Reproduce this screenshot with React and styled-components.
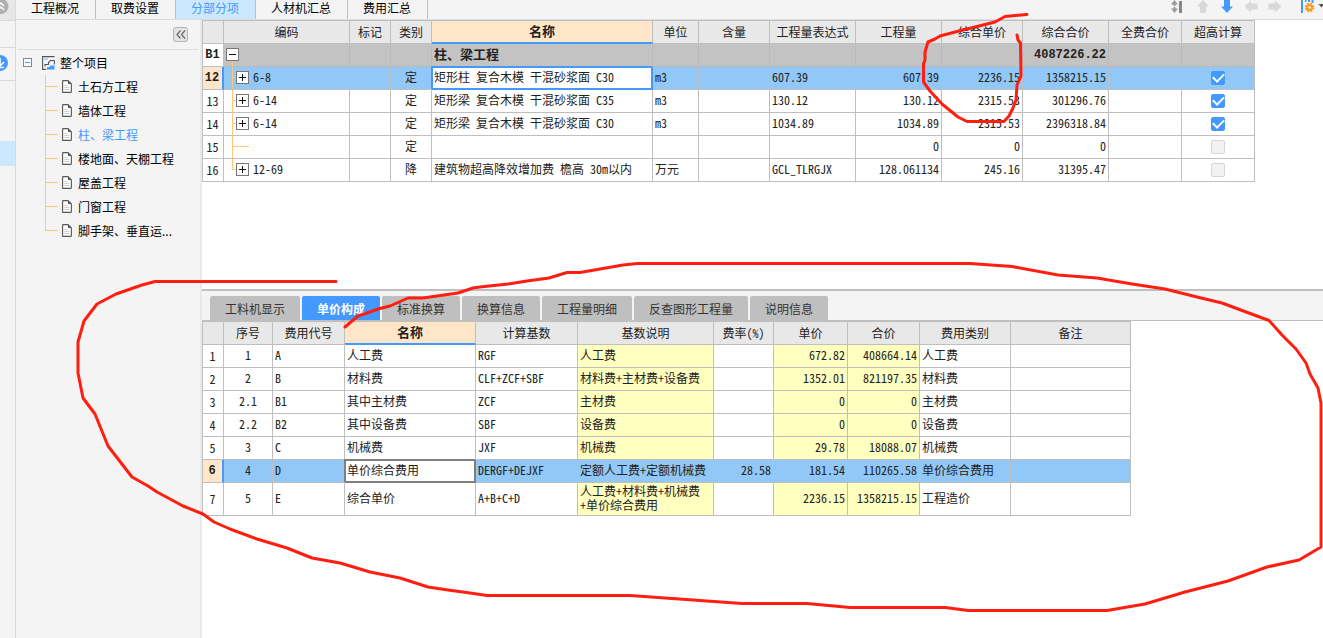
import React, { useState } from 'react'
import styled, { createGlobalStyle, css } from 'styled-components'

const BLUE = '#4499ff'
const LINE = '#bfbfbf'
const BRANCH = '#ffc878'

const GlobalStyle = createGlobalStyle`
    * {
        box-sizing: border-box;
    }
    body {
        margin: 0;
        background: #fff;
        color: #222;
        font-family: "Noto Sans CJK SC", sans-serif;
        font-size: 12px;
        line-height: 15px;
    }
    button {
        margin: 0;
        padding: 0;
        border: 0;
        background: none;
        color: inherit;
        font: inherit;
    }
    svg {
        display: block;
    }
`
const Page = styled.div`
    position: relative;
    display: flex;
    min-height: 100vh;
    overflow: hidden;
`
const Strip = styled.div`
    flex: none;
    width: 16px;
    background: #f4f4f4;
    border-right: 1px solid #d9d9d9;
`
const StripCell = styled.div`
    height: ${props => props.$height}px;
    border-bottom: ${props => props.$line ? '1px solid #d9d9d9' : '0'};
    background: ${props => props.$bg || 'transparent'};
    overflow: hidden;
`
const Content = styled.div`
    flex: 1;
    min-width: 0;
    display: flex;
    flex-direction: column;
`
const TopBar = styled.header`
    display: flex;
    justify-content: space-between;
    height: 20px;
    background: #f4f4f4;
    border-bottom: 1px solid #dcdcdc;
`
const TopTabs = styled.nav`
    display: flex;
`
const TopTab = styled.button`
    height: 19px;
    padding: 0 16px 6px 15px;
    border-right: 1px solid ${LINE};
    background: ${props => props.$active ? '#cce8ff' : 'transparent'};
    color: ${props => props.$active ? BLUE : '#000'};
`
const Tools = styled.div`
    display: flex;
`
const Tool = styled.button`
    display: flex;
    justify-content: center;
    width: 24px;
    height: 16px;
    margin-right: ${props => props.$gap || 0}px;
`
const Body = styled.div`
    flex: 1;
    display: flex;
`
const Sidebar = styled.aside`
    flex: none;
    width: 186px;
    padding: 0 2px;
    background: #f4f4f4;
    border-right: 2px solid #e9e9e9;
`
const SidebarHead = styled.div`
    display: flex;
    justify-content: flex-end;
    align-items: center;
    height: 30px;
    padding-right: 10px;
    border-bottom: 1px solid #dedede;
`
const Collapse = styled.button`
    display: flex;
    align-items: center;
    justify-content: center;
    width: 15px;
    height: 15px;
    border: 1px solid #b4b4b4;
    border-radius: 3px;
    background: #e4e4e4;
`
const Tree = styled.ul`
    margin: 0;
    padding: 0;
    list-style: none;
    color: #000;
`
const TreeRoot = styled.div`
    display: flex;
    align-items: center;
    gap: 5px;
    height: 25px;
    padding-left: 5px;
    color: #000;
`
const TreeItem = styled.li`
    display: flex;
    align-items: center;
    height: 24px;
    padding-left: 27px;
    color: ${props => props.$active ? BLUE : '#000'};
`
const TreeLink = styled.a`
    display: flex;
    align-items: center;
    gap: 6px;
    margin-left: 4px;
    padding-bottom: 1px;
    color: inherit;
    text-decoration: none;
`
const Main = styled.main`
    flex: 1;
    min-width: 0;
    display: flex;
    flex-direction: column;
`
const UpperPane = styled.section`
    min-height: 269px;
`
const LowerPane = styled.section`
    flex: 1;
    border-top: 2px solid ${LINE};
`
const DetailTabs = styled.div`
    display: flex;
    gap: 2px;
    padding: 5px 8px 0;
    background: #f4f4f4;
    border-bottom: 1px solid ${LINE};
`
const DetailTab = styled.button`
    height: 24px;
    padding: 0 15px;
    border-radius: 2px 2px 0 0;
    background: ${props => props.$active ? BLUE : LINE};
    color: ${props => props.$active ? '#fff' : '#333'};
    font-weight: ${props => props.$active ? 'bold' : 'normal'};
`
/* hwid: digits and latin letters take half a Chinese character */
const Grid = styled.table`
    table-layout: fixed;
    width: ${props => props.$width}px;
    border-collapse: separate;
    border-spacing: 0;
    border-top: 1px solid ${LINE};
    border-left: 1px solid ${LINE};
    font-feature-settings: "hwid";
    line-height: 14px;
`
const Col = styled.col`
    width: ${props => props.$width}px;
`
const Head = styled.th`
    height: 23px;
    padding: 0;
    border-right: 1px solid ${LINE};
    border-bottom: 1px solid ${LINE};
    background: #e8e8e8;
    font-weight: normal;
    ${props => props.$current && css`
        padding-bottom: 2px;
        border-bottom: 2px solid ${BLUE};
        background: #ffe6c8;
        font-weight: bold;
        font-size: 13px;
    `}
`
const boldDigits = css`
    font-family: "Liberation Mono", monospace;
    font-weight: bold;
    font-size: 12px;
`
const RowHead = styled.th`
    padding: 0 1px 0 0;
    border-right: 1px solid ${LINE};
    border-bottom: 1px solid ${LINE};
    background: #fff;
    font-weight: normal;
    ${props => props.$bold && boldDigits}
    ${props => props.$current && css`
        border-right: 2px solid ${BLUE};
        background: #ffe6c8;
    `}
`
const Cell = styled.td`
    padding: 0 2px 2px;
    border-right: 1px solid ${LINE};
    border-bottom: 1px solid ${LINE};
    background: ${props => props.$bg || 'transparent'};
    text-align: ${props => props.$align || 'left'};
    white-space: pre;
    ${props => props.$focus && css`
        position: relative;
        border-color: ${props.$focus};
        background: #fff;
        box-shadow: -1px -1px 0 ${props.$focus}, inset 1px 1px 0 ${props.$focus}, inset -1px -1px 0 ${props.$focus};
    `}
`
const ToolCell = styled(Cell)`
    padding: 0;
`
const Row = styled.tr`
    height: ${props => props.$tall ? 33 : 23}px;
    ${props => props.$group && css`
        ${Cell} {
            background: #c3c3c3;
            border-color: #bababa;
            font-weight: bold;
            font-size: 13px;
        }
    `}
    ${props => props.$selected && css`
        background: #91c8f7;
    `}
`
const Total = styled.span`
    ${props => props.$group && boldDigits}
`
const CodeCell = styled.div`
    display: flex;
    align-items: center;
    gap: 3px;
    height: 22px;
`
const Code = styled.span`
    padding-bottom: 2px;
`
const Check = styled.input`
    appearance: none;
    display: grid;
    place-content: center;
    width: 14px;
    height: 14px;
    margin: 0 auto;
    border: 1px solid #d6d6d6;
    border-radius: 2px;
    background: #f2f2f2;
    &:checked {
        border-color: ${BLUE};
        background: ${BLUE};
    }
    &:checked::before {
        content: "";
        width: 9px;
        height: 5px;
        margin-bottom: 3px;
        border-left: 2px solid #fff;
        border-bottom: 2px solid #fff;
        transform: rotate(-45deg);
    }
`
const Marks = styled.svg`
    position: absolute;
    top: 0;
    left: 0;
    pointer-events: none;
`

const topTabs = ['工程概况', '取费设置', '分部分项', '人材机汇总', '费用汇总']
const treeItems = ['土石方工程', '墙体工程', '柱、梁工程', '楼地面、天棚工程', '屋盖工程', '门窗工程', '脚手架、垂直运...']
const detailTabs = ['工料机显示', '单价构成', '标准换算', '换算信息', '工程量明细', '反查图形工程量', '说明信息']

const itemCols = [
    ['', 21], ['编码', 126], ['标记', 41], ['类别', 41], ['名称', 221], ['单位', 46], ['含量', 71],
    ['工程量表达式', 86], ['工程量', 86], ['综合单价', 81], ['综合合价', 86], ['全费合价', 73], ['超高计算', 73],
]
const items = [
    { no: 'B1', node: 'minus', name: '柱、梁工程', total: '4087226.22', group: true },
    { no: '12', node: 'plus', code: '6-8', type: '定', name: '矩形柱 复合木模 干混砂浆面 C30', unit: 'm3', expr: '607.39', qty: '607.39', price: '2236.15', total: '1358215.15', high: true, selected: true },
    { no: '13', node: 'plus', code: '6-14', type: '定', name: '矩形梁 复合木模 干混砂浆面 C35', unit: 'm3', expr: '130.12', qty: '130.12', price: '2315.53', total: '301296.76', high: true },
    { no: '14', node: 'plus', code: '6-14', type: '定', name: '矩形梁 复合木模 干混砂浆面 C30', unit: 'm3', expr: '1034.89', qty: '1034.89', price: '2315.53', total: '2396318.84', high: true },
    { no: '15', node: 'leaf', type: '定', qty: '0', price: '0', total: '0', high: false },
    { no: '16', node: 'last', code: '12-69', type: '降', name: '建筑物超高降效增加费 檐高 30m以内', unit: '万元', expr: 'GCL_TLRGJX', qty: '128.061134', price: '245.16', total: '31395.47', high: false },
]

const feeCols = [
    ['', 21], ['序号', 49], ['费用代号', 72], ['名称', 131], ['计算基数', 102], ['基数说明', 136],
    ['费率(%)', 60], ['单价', 74], ['合价', 72], ['费用类别', 91], ['备注', 120],
]
const fees = [
    ['1', 'A', '人工费', 'RGF', '人工费', '', '672.82', '408664.14', '人工费'],
    ['2', 'B', '材料费', 'CLF+ZCF+SBF', '材料费+主材费+设备费', '', '1352.01', '821197.35', '材料费'],
    ['2.1', 'B1', '其中主材费', 'ZCF', '主材费', '', '0', '0', '主材费'],
    ['2.2', 'B2', '其中设备费', 'SBF', '设备费', '', '0', '0', '设备费'],
    ['3', 'C', '机械费', 'JXF', '机械费', '', '29.78', '18088.07', '机械费'],
    ['4', 'D', '单价综合费用', 'DERGF+DEJXF', '定额人工费+定额机械费', '28.58', '181.54', '110265.58', '单价综合费用'],
    ['5', 'E', '综合单价', 'A+B+C+D', '人工费+材料费+机械费\n+单价综合费用', '', '2236.15', '1358215.15', '工程造价'],
]

const Node = ({ kind }) => {
    const x = kind === 'minus' ? 2 : 12
    return (
        <svg width="26" height="22" viewBox="0 0 26 22" fill="none" shapeRendering="crispEdges">
            {kind === 'minus' && <path d="M8.5 17v5" stroke={BRANCH} />}
            {kind !== 'minus' && <path d={`M8.5 0V${kind === 'last' ? 10.5 : 22}M8 10.5h${kind === 'leaf' ? 17 : 4}`} stroke={BRANCH} />}
            {kind !== 'leaf' && <rect x={x + 0.5} y="4.5" width="12" height="12" fill="#fff" stroke="#777" />}
            {kind !== 'leaf' && <path d={`M${x + 3} 10.5h7`} stroke="#111" />}
            {(kind === 'plus' || kind === 'last') && <path d={`M${x + 6.5} 7v7`} stroke="#111" />}
        </svg>
    )
}

const Doc = () => (
    <svg width="10" height="13" viewBox="0 0 10 13" fill="none">
        <path d="M.6 1.2Q.6.6 1.2.6H6L9.4 4v7.8q0 .6-.6.6H1.2q-.6 0-.6-.6z" fill="#fff" stroke="#555" strokeWidth="1.1" />
        <path d="M6 .5V4h3.5z" fill="#555" />
        <path d="M2.5 5.5h3M2.5 7.5h5M2.5 9.5h5" stroke="#ccc" />
    </svg>
)

const Project = () => (
    <svg width="13" height="14" viewBox="0 0 13 14" fill="none">
        <path d="M12.5.6H.6v12.8h3.5M12.4 4.5v4" stroke="#555" strokeWidth="1.1" />
        <path d="M2 2.3h4v1.6H2z" fill="#a9cdfb" />
        <path d="M3 10.5V8.5h3.5V6.5L8.5 4.5h4" stroke="#555" strokeWidth="1.1" />
        <path d="M5 13.5V11h3V9.5h4.5v4z" fill={BLUE} />
    </svg>
)

const Arrow = ({ turn, color }) => (
    <svg width="14" height="14" viewBox="0 0 14 14">
        <path d="M7 0l6 6.5H10V13H4V6.5H1z" fill={color} transform={`rotate(${turn} 7 6.5)`} />
    </svg>
)

const Headings = ({ cols }) => (
    <>
        <colgroup>
            {cols.map(([label, width], i) => <Col key={i} $width={width} />)}
        </colgroup>
        <thead>
            <tr>
                {cols.map(([label], i) => (
                    <Head key={i} $current={label === '名称'}>{label}</Head>
                ))}
            </tr>
        </thead>
    </>
)

const ItemTable = () => (
    <Grid $width={1053}>
        <Headings cols={itemCols} />
        <tbody>
            {items.map(item => (
                <Row key={item.no} $group={item.group} $selected={item.selected}>
                    <RowHead $current={item.selected} $bold={item.selected || item.group}>{item.no}</RowHead>
                    <ToolCell>
                        <CodeCell>
                            <Node kind={item.node} />
                            <Code>{item.code}</Code>
                        </CodeCell>
                    </ToolCell>
                    <Cell />
                    <Cell $align="center">{item.type}</Cell>
                    <Cell $focus={item.selected && BLUE}>{item.name}</Cell>
                    <Cell>{item.unit}</Cell>
                    <Cell />
                    <Cell>{item.expr}</Cell>
                    <Cell $align="right">{item.qty}</Cell>
                    <Cell $align="right">{item.price}</Cell>
                    <Cell $align="right"><Total $group={item.group}>{item.total}</Total></Cell>
                    <Cell />
                    <ToolCell>
                        {!item.group &&
                            <Check
                                type="checkbox"
                                aria-label={`超高计算 ${item.no}`}
                                defaultChecked={item.high}
                                disabled={!item.high}
                            />
                        }
                    </ToolCell>
                </Row>
            ))}
        </tbody>
    </Grid>
)

const FeeTable = () => (
    <Grid $width={929}>
        <Headings cols={feeCols} />
        <tbody>
            {fees.map((fee, i) => {
                const selected = i === 5
                const yellow = selected ? undefined : '#ffffc0'
                return (
                    <Row key={i} $selected={selected} $tall={i === 6}>
                        <RowHead $current={selected} $bold={selected}>{i + 1}</RowHead>
                        <Cell $align="center">{fee[0]}</Cell>
                        <Cell>{fee[1]}</Cell>
                        <Cell $focus={selected && '#7f7f7f'}>{fee[2]}</Cell>
                        <Cell>{fee[3]}</Cell>
                        <Cell $bg={yellow}>{fee[4]}</Cell>
                        <Cell $align="right">{fee[5]}</Cell>
                        <Cell $bg={yellow} $align="right">{fee[6]}</Cell>
                        <Cell $bg={yellow} $align="right">{fee[7]}</Cell>
                        <Cell>{fee[8]}</Cell>
                        <Cell />
                    </Row>
                )
            })}
        </tbody>
    </Grid>
)

const App = () => {
    const [topTab, setTopTab] = useState(2)
    const [detailTab, setDetailTab] = useState(1)

    return (
        <Page>
            <GlobalStyle />
            <Strip>
                <StripCell $height={21} $line $bg="#e7e7e7">
                    <svg width="15" height="20" viewBox="0 0 15 20" fill="none">
                        <circle cx="1" cy="6.5" r="7.5" fill="#b0b0b0" />
                        <path d="M-2 6l3-3 3 3M-2 10l3-3 3 3" stroke="#fff" strokeWidth="1.5" />
                    </svg>
                </StripCell>
                <StripCell $height={27} $line />
                <StripCell $height={33} $line>
                    <svg width="15" height="32" viewBox="0 0 15 32" fill="none">
                        <circle cx="0" cy="15" r="8" fill={BLUE} />
                        <path d="M0 10v7M-4 14l4 4 4-4M-4 19.5h8" stroke="#fff" strokeWidth="1.5" />
                    </svg>
                </StripCell>
                <StripCell $height={60} />
                <StripCell $height={25} $bg="#cce8ff" />
            </Strip>
            <Content>
                <TopBar>
                    <TopTabs>
                        {topTabs.map((label, i) => (
                            <TopTab key={label} $active={i === topTab} onClick={() => setTopTab(i)}>{label}</TopTab>
                        ))}
                    </TopTabs>
                    <Tools>
                        <Tool aria-label="排序" $gap={2}>
                            <svg width="13" height="14" viewBox="0 0 13 14">
                                <path d="M3.5 0L7 4.5H4.5V8.5H7L3.5 13 0 8.500h2.500v-4H0z" fill="#999" />
                                <path d="M2 6h3v1H2z" fill="#f4f4f4" />
                                <path d="M8 1h3v12H8z" fill="#888" />
                            </svg>
                        </Tool>
                        <Tool aria-label="上移"><Arrow turn={0} color="#d9d9d9" /></Tool>
                        <Tool aria-label="下移"><Arrow turn={180} color={BLUE} /></Tool>
                        <Tool aria-label="左移"><Arrow turn={-90} color="#d9d9d9" /></Tool>
                        <Tool aria-label="右移" $gap={12}><Arrow turn={90} color="#d9d9d9" /></Tool>
                        <Tool aria-label="设置">
                            <svg width="24" height="14" viewBox="0 0 24 14">
                                <path d="M2 0h2v13H2zM6 0h1.5v2H6zM9 0h2v2H9zM12.5 0h2v3h-2z" fill={BLUE} />
                                <circle cx="10.5" cy="7.5" r="3.5" fill="#ff9b1f" />
                                <circle cx="10.5" cy="7.5" r="3.9" fill="none" stroke="#ff9b1f" strokeWidth="1.8" strokeDasharray="2 1.06" />
                                <circle cx="10.5" cy="7.5" r="1.3" fill="#fff" />
                                <path d="M19.5 4H25l-2.7 3.5z" fill="#555" />
                            </svg>
                        </Tool>
                    </Tools>
                </TopBar>
                <Body>
                    <Sidebar>
                        <SidebarHead>
                            <Collapse aria-label="收起">
                                <svg width="10" height="9" viewBox="0 0 10 9" fill="none">
                                    <path d="M4.5.5l-3.500 4 3.500 4M9 .5l-3.500 4 3.500 4" stroke="#666" strokeWidth="1.2" />
                                </svg>
                            </Collapse>
                        </SidebarHead>
                        <TreeRoot>
                            <svg width="14" height="9" viewBox="0 0 14 9" fill="none" shapeRendering="crispEdges">
                                <path d="M.5.5h8v8h-8z" fill="#fff" stroke="#888" />
                                <path d="M2 4.5h5" stroke="#2aa7e0" />
                            </svg>
                            <Project />
                            <span>整个项目</span>
                        </TreeRoot>
                        <Tree>
                            {treeItems.map((label, i) => (
                                <TreeItem key={label} $active={i === 2}>
                                    <svg width="13" height="24" viewBox="0 0 13 24" fill="none" shapeRendering="crispEdges">
                                        <path d={`M.5 0V${i === treeItems.length - 1 ? 11 : 24}M0 11.5h13`} stroke={BRANCH} />
                                    </svg>
                                    <TreeLink href="#"><Doc />{label}</TreeLink>
                                </TreeItem>
                            ))}
                        </Tree>
                    </Sidebar>
                    <Main>
                        <UpperPane>
                            <ItemTable />
                        </UpperPane>
                        <LowerPane>
                            <DetailTabs>
                                {detailTabs.map((label, i) => (
                                    <DetailTab key={label} $active={i === detailTab} onClick={() => setDetailTab(i)}>{label}</DetailTab>
                                ))}
                            </DetailTabs>
                            <FeeTable />
                        </LowerPane>
                    </Main>
                </Body>
            </Content>
            {/* hand-drawn red pen marks over the sheet */}
            <Marks width="1323" height="638" viewBox="0 0 1323 638" fill="none" stroke="#ff1e10" strokeWidth="3" strokeLinejoin="round" strokeLinecap="round">
                <path d="M1027 14.5L1021 15L1005 16.5L995 22L957 31.5L940 36L935 39L928 42L925 52V60L923.5 64V82L930 91L942 104L958 117L967 121.5H1004L1009 116L1013 108L1016 100L1017 85L1021 76L1020.5 43L1018 40L1017 35" />
                <path d="M336 281.5H155L142 285L116 294L97 304L84 321L80 335L78 342V373L83 398L95 414L108 446L132 477L148 486L157 492L183 506L203 514L214 522L230 529L257 539L287 548L312 558L340 563L370 572L400 578L428 587L448 590L470 593L487 595.5H630L742 603.5H807L850 607.5H945L968 610.5H1107L1145 604L1185 592L1228 581L1267 567L1299 560L1321 547V403L1318 388L1310 374L1306 363L1296 349L1282 335L1269 320.5L1222 303L1197 297L1165 289L1132 284L1097 278L1058 275L1012 266.5L970 263.5H637L623 265L580 272.5H567L549 278L527 281L508 284L480 287L473 288L458 293L423 298H408L390 306L378 309L370 312L358 316L352 321L345 327" />
            </Marks>
        </Page>
    )
}

export default App
